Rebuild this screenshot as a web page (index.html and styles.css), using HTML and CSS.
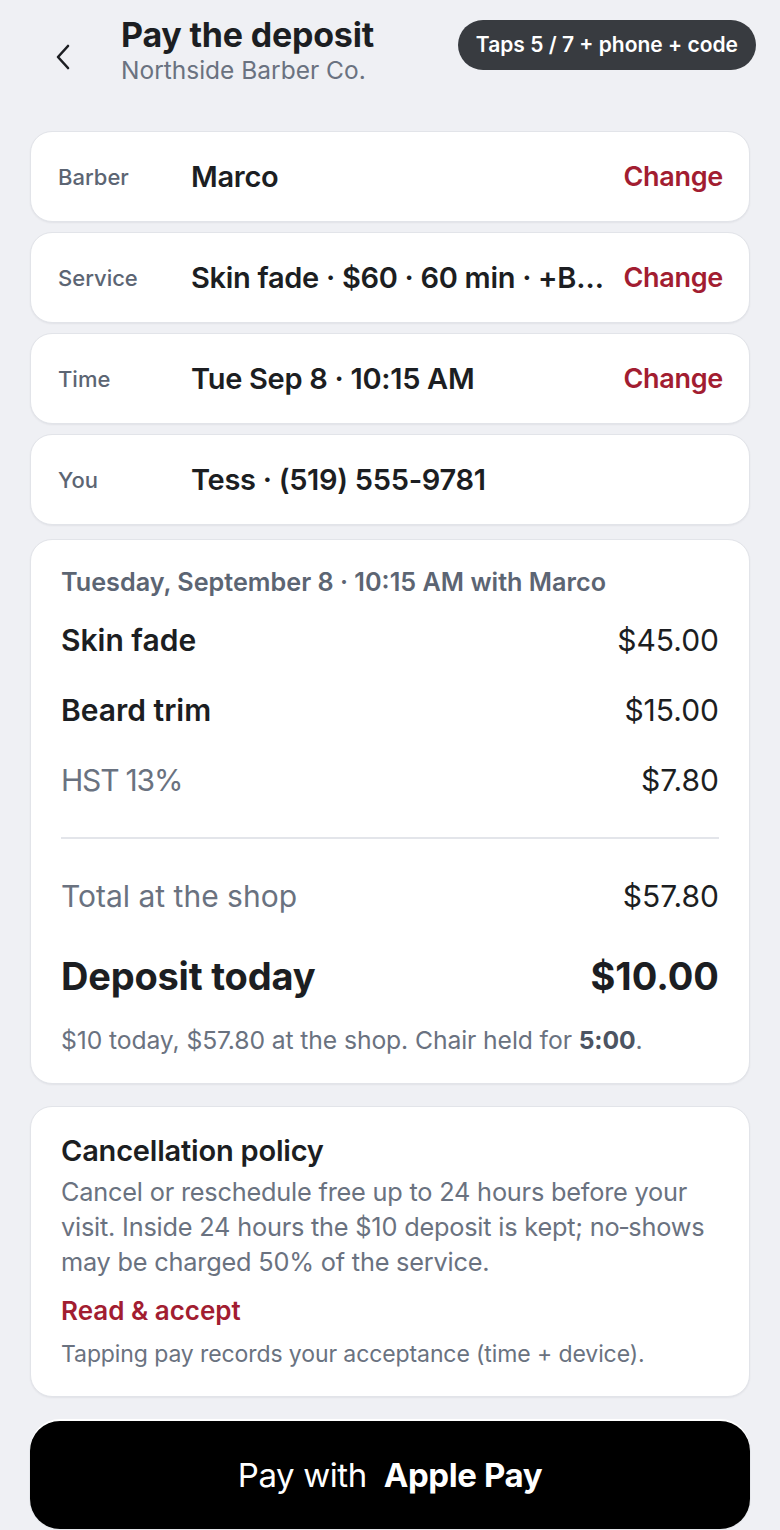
FILE: index.html
```html
<!DOCTYPE html>
<html lang="en">
<head>
    <meta charset="UTF-8">
    <meta name="viewport" content="width=device-width, initial-scale=1.0">
    <title>Pay the deposit</title>
    <link rel="stylesheet" href="styles.css">
</head>
<body>
    <div class="screen">
        <header class="top">
            <button class="back" aria-label="Back">
                <svg width="20" height="28" viewBox="0 0 20 28">
                    <path d="M15 3 L5 14 L15 25" fill="none" stroke="#1c1e22" stroke-width="2.6" stroke-linecap="round" stroke-linejoin="round"/>
                </svg>
            </button>
            <div class="titles">
                <h1>Pay the deposit</h1>
                <p class="shop">Northside Barber Co.</p>
            </div>
            <span class="taps">Taps 5 / 7 + phone + code</span>
        </header>

        <main class="content">
            <div class="info">
                <span class="label">Barber</span>
                <span class="value">Marco</span>
                <a class="change" href="#">Change</a>
            </div>
            <div class="info">
                <span class="label">Service</span>
                <span class="value">Skin fade · $60 · 60 min · +Beard trim · $15</span>
                <a class="change" href="#">Change</a>
            </div>
            <div class="info">
                <span class="label">Time</span>
                <span class="value">Tue Sep 8 · 10:15 AM</span>
                <a class="change" href="#">Change</a>
            </div>
            <div class="info">
                <span class="label">You</span>
                <span class="value">Tess · (519) 555-9781</span>
            </div>

            <section class="card summary">
                <p class="when">Tuesday, September 8 · 10:15 AM with Marco</p>
                <div class="line item"><span>Skin fade</span><span>$45.00</span></div>
                <div class="line item"><span>Beard trim</span><span>$15.00</span></div>
                <div class="line tax"><span class="hst">HST 13%</span><span>$7.80</span></div>
                <hr>
                <div class="line tax"><span>Total at the shop</span><span>$57.80</span></div>
                <div class="line deposit"><span>Deposit today</span><span>$10.00</span></div>
                <p class="note">$10 today, $57.80 at the shop. Chair held for <b>5:00</b>.</p>
            </section>

            <section class="card policy">
                <h2>Cancellation policy</h2>
                <p class="terms">Cancel or reschedule free up to 24 hours before your visit. Inside 24 hours the $10 deposit is kept; no&#8209;shows may be charged 50% of the service.</p>
                <a class="accept" href="#">Read &amp; accept</a>
                <p class="note">Tapping pay records your acceptance (time + device).</p>
            </section>
        </main>

        <div class="footer">
            <button class="pay">Pay with <strong>Apple Pay</strong></button>
        </div>
    </div>
</body>
</html>
```

FILE: styles.css
```css
* {
    margin: 0;
    padding: 0;
    box-sizing: border-box;
}
body {
    background: #eff0f4;
    font-family: Inter, "Noto Sans", sans-serif;
    color: #1c1e22;
}
.screen {
    min-height: 100vh;
}

/* header */
.top {
    display: flex;
    align-items: flex-start;
    padding: 14px 24px 0 50px;
    height: 131px;
}
.back {
    border: none;
    background: none;
    margin-top: 28px;
    width: 26px;
    height: 30px;
    display: flex;
    align-items: center;
    justify-content: center;
}
.titles {
    margin-left: 45px;
    flex: 1;
}
.titles h1 {
    font-size: 34px;
    line-height: 42px;
    font-weight: 700;
    letter-spacing: -0.2px;
}
.shop {
    font-size: 24.5px;
    line-height: 28px;
    color: #6a7280;
}
.taps {
    margin-top: 6px;
    background: #383b40;
    color: #fff;
    font-size: 21px;
    font-weight: 600;
    line-height: 50px;
    padding: 0 18px;
    border-radius: 25px;
}

/* cards */
.content {
    padding: 0 30px;
    display: flex;
    flex-direction: column;
    gap: 10px;
}
.info,
.card {
    background: #fff;
    border: 1px solid #e2e4e9;
    border-radius: 22px;
    box-shadow: 0 1px 2px rgba(20, 24, 32, 0.06);
}
.info {
    height: 91px;
    display: flex;
    align-items: center;
    padding: 0 26px 0 27px;
}
.label {
    width: 133px;
    flex-shrink: 0;
    font-size: 22px;
    font-weight: 500;
    color: #5c6573;
}
.value {
    flex: 1;
    min-width: 0;
    font-size: 29px;
    font-weight: 600;
    letter-spacing: -0.3px;
    white-space: nowrap;
    overflow: hidden;
    text-overflow: ellipsis;
    margin-right: 18px;
}
.change {
    font-size: 27px;
    font-weight: 600;
    color: #a21d31;
    text-decoration: none;
    letter-spacing: -0.3px;
}

.summary {
    margin-top: 4px;
    padding: 27px 30px 28px;
}
.when {
    font-size: 25.2px;
    line-height: 30px;
    font-weight: 600;
    color: #5c6573;
    margin-bottom: 8px;
}
.line {
    display: flex;
    justify-content: space-between;
    font-size: 30px;
    line-height: 40px;
    padding: 15px 0;
}
.line span:last-child {
    font-weight: 400;
    color: #1c1e22;
}
.item span:first-child {
    font-weight: 600;
}
.tax span:first-child {
    color: #6a7280;
    font-weight: 400;
}
.tax .hst {
    letter-spacing: -1.2px;
}
.summary hr {
    border: none;
    border-top: 2px solid #e3e5ea;
    margin: 22px 0;
}
.line.deposit {
    font-size: 38px;
    line-height: 44px;
    padding: 23px 0 0;
    font-weight: 700;
    letter-spacing: -0.2px;
}
.line.deposit span:last-child {
    font-weight: 700;
    letter-spacing: 0;
}
.note {
    font-size: 24.7px;
    line-height: 30px;
    color: #6a7280;
    letter-spacing: -0.1px;
}
.summary .note {
    margin-top: 27px;
}
.note b {
    color: #4c5462;
    font-weight: 700;
}

.policy {
    margin-top: 12px;
    padding: 28px 30px 27px;
}
.policy h2 {
    font-size: 29px;
    line-height: 32px;
    font-weight: 600;
    letter-spacing: -0.2px;
}
.terms {
    margin-top: 7px;
    font-size: 25.3px;
    line-height: 35px;
    color: #6a7280;
    letter-spacing: -0.2px;
}
.accept {
    display: block;
    margin-top: 16px;
    font-size: 26px;
    line-height: 32px;
    font-weight: 600;
    color: #a21d31;
    text-decoration: none;
}
.policy .note {
    margin-top: 12px;
    font-size: 23px;
}

/* pay button */
.footer {
    padding: 24px 30px 0;
}
.pay {
    width: 100%;
    height: 108px;
    border: none;
    border-radius: 30px;
    background: #000;
    color: #fff;
    font-family: Inter, "Noto Sans", sans-serif;
    font-size: 33px;
    font-weight: 400;
    letter-spacing: -0.4px;
    box-shadow: 0 -2px 0 #fff, 0 0 0 1px #e6e8ec;
}
.pay strong {
    font-weight: 700;
    margin-left: 8px;
}
```
